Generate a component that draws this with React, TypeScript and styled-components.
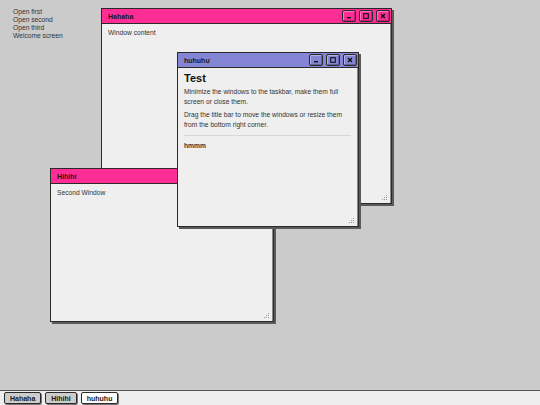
import styled, { createGlobalStyle } from 'styled-components';

const GlobalStyle = createGlobalStyle`
  html, body, #root {
    margin: 0;
    padding: 0;
    width: 100%;
    height: 100%;
  }
  body {
    font-family: "Liberation Sans", Arial, sans-serif;
    color: #222;
    overflow: hidden;
  }
`;

const Screen = styled.div`
  display: flex;
  flex-direction: column;
  width: 540px;
  height: 405px;
  background: #cbcbcb;
`;

const Desktop = styled.div`
  position: relative;
  flex: 1;
  padding: 8px 13px;
`;

const Menu = styled.ul`
  list-style: none;
  margin: 0;
  padding: 0;
  font-size: 6.7px;
  line-height: 8px;
  color: #333;
`;

const Window = styled.div<{ $x: number; $y: number; $w: number; $h: number; $z: number }>`
  position: absolute;
  left: ${(p) => p.$x}px;
  top: ${(p) => p.$y}px;
  width: ${(p) => p.$w}px;
  height: ${(p) => p.$h}px;
  z-index: ${(p) => p.$z};
  box-sizing: border-box;
  display: flex;
  flex-direction: column;
  border: 1px solid #2a2a2a;
  box-shadow: 2px 2px 0 #5a5a5a;
  background: #efefef;
`;

const TitleBar = styled.div<{ $color: string }>`
  display: flex;
  align-items: center;
  justify-content: space-between;
  height: 14px;
  padding: 0 1px 0 6px;
  background: ${(p) => p.$color};
  border-bottom: 1px solid #2a2a2a;
  flex-shrink: 0;
`;

const Title = styled.span`
  font-size: 7px;
  font-weight: bold;
  color: #1a1a1a;
`;

const Controls = styled.div`
  display: flex;
  gap: 3px;
`;

const ControlButton = styled.div`
  box-sizing: border-box;
  width: 14px;
  height: 12px;
  display: flex;
  align-items: center;
  justify-content: center;
  border: 1px solid #2a2a2a;
  border-radius: 2px;
  box-shadow: inset 1px 1px 0 rgba(255, 255, 255, 0.35), inset -1px -1px 0 rgba(0, 0, 0, 0.25);
`;

const Body = styled.div`
  position: relative;
  flex: 1;
  padding: 4px 6px;
  font-size: 6.7px;
  line-height: 9.5px;
  color: #333;
  border-right: 1px solid #888;
`;

const Heading = styled.h1`
  margin: 0 0 2px;
  font-size: 11px;
  line-height: 13px;
  font-weight: bold;
  color: #111;
`;

const Paragraph = styled.p`
  margin: 0 0 4px;
`;

const Divider = styled.hr`
  border: none;
  border-top: 1px solid #d8d8d8;
  margin: 6px 0 5px;
`;

const Strong = styled.p`
  margin: 0;
  font-weight: bold;
`;

const Grip = styled.svg`
  position: absolute;
  right: 2px;
  bottom: 2px;
`;

const Taskbar = styled.div`
  display: flex;
  align-items: center;
  gap: 4px;
  height: 14px;
  padding: 0 4px;
  background: #eeeeee;
  border-top: 1px solid #555;
`;

const TaskButton = styled.div<{ $active?: boolean }>`
  box-sizing: border-box;
  height: 12px;
  padding: 0 5px;
  display: flex;
  align-items: center;
  font-size: 7px;
  font-weight: bold;
  color: #1a1a1a;
  background: ${(p) => (p.$active ? '#ffffff' : '#cccccc')};
  border: 1px solid #2a2a2a;
  border-radius: 2px;
  box-shadow: 1px 1px 0 #777;
`;

const ResizeGrip = () => (
  <Grip width="6" height="6" viewBox="0 0 6 6">
    <rect x="4" y="0" width="1" height="1" fill="#999" />
    <rect x="2" y="2" width="1" height="1" fill="#999" />
    <rect x="4" y="2" width="1" height="1" fill="#999" />
    <rect x="0" y="4" width="1" height="1" fill="#999" />
    <rect x="2" y="4" width="1" height="1" fill="#999" />
    <rect x="4" y="4" width="1" height="1" fill="#999" />
  </Grip>
);

const WindowControls = () => (
  <Controls>
    <ControlButton>
      <svg width="6" height="6" viewBox="0 0 6 6">
        <rect x="1" y="4" width="4" height="1.4" fill="#111" />
      </svg>
    </ControlButton>
    <ControlButton>
      <svg width="6" height="6" viewBox="0 0 6 6">
        <rect x="0.7" y="0.7" width="4.6" height="4.6" fill="none" stroke="#111" strokeWidth="1.1" />
      </svg>
    </ControlButton>
    <ControlButton>
      <svg width="6" height="6" viewBox="0 0 6 6">
        <path d="M1 1 L5 5 M5 1 L1 5" stroke="#111" strokeWidth="1.4" />
      </svg>
    </ControlButton>
  </Controls>
);

const App = () => {
  return (
    <>
      <GlobalStyle />
      <Screen>
        <Desktop>
          <Menu>
            <li>Open first</li>
            <li>Open second</li>
            <li>Open third</li>
            <li>Welcome screen</li>
          </Menu>

          <Window $x={101} $y={8} $w={291} $h={196} $z={1}>
            <TitleBar $color="#ff2d95">
              <Title>Hahaha</Title>
              <WindowControls />
            </TitleBar>
            <Body>
              Window content
              <ResizeGrip />
            </Body>
          </Window>

          <Window $x={50} $y={168} $w={224} $h={154} $z={2}>
            <TitleBar $color="#ff2d95">
              <Title>Hihihi</Title>
              <WindowControls />
            </TitleBar>
            <Body>
              Second Window
              <ResizeGrip />
            </Body>
          </Window>

          <Window $x={177} $y={52} $w={182} $h={175} $z={3}>
            <TitleBar $color="#8585d6">
              <Title>huhuhu</Title>
              <WindowControls />
            </TitleBar>
            <Body>
              <Heading>Test</Heading>
              <Paragraph>
                Minimize the windows to the taskbar, make them full screen or close them.
              </Paragraph>
              <Paragraph>
                Drag the title bar to move the windows or resize them from the bottom right corner.
              </Paragraph>
              <Divider />
              <Strong>hmmm</Strong>
              <ResizeGrip />
            </Body>
          </Window>
        </Desktop>
        <Taskbar>
          <TaskButton>Hahaha</TaskButton>
          <TaskButton>Hihihi</TaskButton>
          <TaskButton $active>huhuhu</TaskButton>
        </Taskbar>
      </Screen>
    </>
  );
};

export default App;
